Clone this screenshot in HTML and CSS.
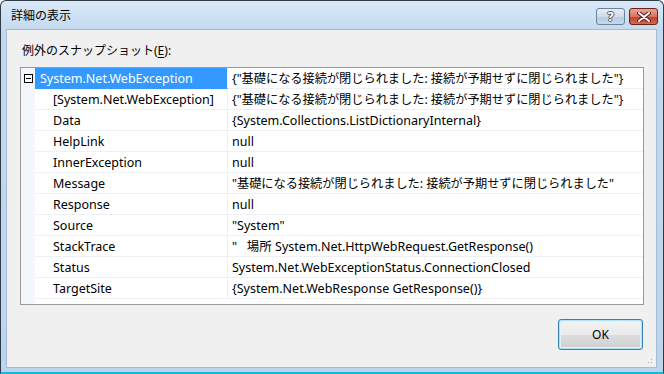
FILE: index.html
```html
<!DOCTYPE html>
<html lang="ja">
<head>
    <meta charset="UTF-8">
    <title>詳細の表示</title>
    <link rel="stylesheet" href="styles.css">
</head>
<body>
    <div class="window">
        <!-- タイトルバー -->
        <div class="titlebar">
            <span class="title">詳細の表示</span>
            <div class="caption-buttons">
                <div class="cap-btn help">?</div>
                <div class="cap-btn close">
                    <svg width="14" height="10" viewBox="0 0 14 10">
                        <path d="M2 1 L12 9 M12 1 L2 9" stroke="#5a1c12" stroke-width="4" stroke-linecap="round"/>
                        <path d="M2 1 L12 9 M12 1 L2 9" stroke="#ffffff" stroke-width="2" stroke-linecap="round"/>
                    </svg>
                </div>
            </div>
        </div>

        <div class="client">
            <div class="label">例外のスナップショット(<u>E</u>):</div>

            <div class="grid">
                <div class="row">
                    <div class="gutter"><span class="expander"></span></div>
                    <div class="name selected">System.Net.WebException</div>
                    <div class="value jp">{"基礎になる接続が閉じられました: 接続が予期せずに閉じられました"}</div>
                </div>
                <div class="row">
                    <div class="gutter"></div>
                    <div class="name child">[System.Net.WebException]</div>
                    <div class="value jp">{"基礎になる接続が閉じられました: 接続が予期せずに閉じられました"}</div>
                </div>
                <div class="row">
                    <div class="gutter"></div>
                    <div class="name child">Data</div>
                    <div class="value">{System.Collections.ListDictionaryInternal}</div>
                </div>
                <div class="row">
                    <div class="gutter"></div>
                    <div class="name child">HelpLink</div>
                    <div class="value">null</div>
                </div>
                <div class="row">
                    <div class="gutter"></div>
                    <div class="name child">InnerException</div>
                    <div class="value">null</div>
                </div>
                <div class="row">
                    <div class="gutter"></div>
                    <div class="name child">Message</div>
                    <div class="value jp">"基礎になる接続が閉じられました: 接続が予期せずに閉じられました"</div>
                </div>
                <div class="row">
                    <div class="gutter"></div>
                    <div class="name child">Response</div>
                    <div class="value">null</div>
                </div>
                <div class="row">
                    <div class="gutter"></div>
                    <div class="name child">Source</div>
                    <div class="value">"System"</div>
                </div>
                <div class="row">
                    <div class="gutter"></div>
                    <div class="name child">StackTrace</div>
                    <div class="value">"&nbsp;&nbsp;&nbsp;場所 System.Net.HttpWebRequest.GetResponse()</div>
                </div>
                <div class="row">
                    <div class="gutter"></div>
                    <div class="name child">Status</div>
                    <div class="value">System.Net.WebExceptionStatus.ConnectionClosed</div>
                </div>
                <div class="row">
                    <div class="gutter"></div>
                    <div class="name child">TargetSite</div>
                    <div class="value">{System.Net.WebResponse GetResponse()}</div>
                </div>
                <div class="grid-fill">
                    <div class="gutter"></div>
                    <div class="fill"></div>
                </div>
            </div>

            <div class="buttons">
                <button class="ok">OK</button>
            </div>
            <div class="grip"></div>
        </div>
    </div>
</body>
</html>
```

FILE: styles.css
```css
/* ウィンドウ枠 */
body {
    margin: 0;
    background: #ffffff;
    font-family: "Noto Sans", "Noto Sans CJK JP", sans-serif;
    font-size: 12px;
    color: #000;
}
.window {
    width: 664px;
    height: 374px;
    box-sizing: border-box;
    border: 1px solid #2e3a46;
    border-bottom: 2px solid #1ab6d6;
    border-radius: 6px 6px 0 0;
    background: linear-gradient(to bottom, #d9e8f7 0px, #c4d9ef 30px, #bcd5ee 100%);
    padding: 0 6px 4px 5px;
    display: flex;
    flex-direction: column;
}
.titlebar {
    height: 28px;
    display: flex;
    align-items: center;
    justify-content: space-between;
}
.title {
    padding-left: 5px;
    padding-bottom: 1px;
    font-size: 12px;
    color: #000;
}
.caption-buttons {
    display: flex;
    gap: 4px;
    align-self: flex-start;
    margin-top: 7px;
}
.cap-btn {
    width: 27px;
    height: 15px;
    border-radius: 3px;
    display: flex;
    align-items: center;
    justify-content: center;
}
.help {
    border: 1px solid #6d8199;
    background: linear-gradient(to bottom, #e6eef8 0%, #cfdcec 50%, #b7cbe2 51%, #c7d8ec 100%);
    color: #fff;
    font-weight: bold;
    font-size: 13px;
    line-height: 15px;
    text-shadow: -1px 0 #4a5a6c, 1px 0 #4a5a6c, 0 -1px #4a5a6c, 0 1px #4a5a6c;
}
.close {
    border: 1px solid #6a2218;
    background: linear-gradient(to bottom, #e8a595 0%, #d9735e 50%, #c23e27 51%, #d16a50 100%);
    margin-right: -1px;
}

/* クライアント領域 */
.client {
    flex: 1;
    position: relative;
    background: #f0f0f0;
    border: 1px solid #a7bcd3;
    padding: 0 12px 0 13px;
    display: flex;
    flex-direction: column;
}
.label {
    margin-top: 11px;
    margin-left: 2px;
    height: 19px;
    line-height: 19px;
    color: #000;
}
.label u {
    text-underline-offset: 2px;
}
.grid {
    margin-top: 7px;
    height: 236px;
    border: 1px solid #9a9a9a;
    background: #ffffff;
    display: flex;
    flex-direction: column;
    font-size: 12.5px;
}
.row {
    display: flex;
    height: 21px;
    line-height: 21px;
}
.gutter {
    width: 14px;
    flex: none;
    background: #f3f6fb;
    display: flex;
    align-items: center;
    justify-content: center;
}
.name {
    width: 193px;
    flex: none;
    border-right: 1px solid #eef0f4;
    border-bottom: 1px solid #eef0f4;
    padding-left: 5px;
    box-sizing: border-box;
    white-space: nowrap;
}
.name.child {
    padding-left: 18px;
}
.name.selected {
    background: #3399ff;
    color: #fff;
    border-bottom-color: #3399ff;
}
.value {
    flex: 1;
    padding-left: 4px;
    border-bottom: 1px solid #eef0f4;
    white-space: nowrap;
    overflow: hidden;
}
.value.jp {
    font-size: 12.2px;
}
.expander {
    width: 7px;
    height: 7px;
    border: 1px solid #000;
    background: #fff;
    position: relative;
    margin-left: 1px;
}
.expander::after {
    content: "";
    position: absolute;
    left: 1px;
    top: 3px;
    width: 5px;
    height: 1px;
    background: #000;
}
.grid-fill {
    flex: 1;
    display: flex;
}
.grid-fill .fill {
    flex: 1;
    background: #fff;
}

/* ボタン */
.buttons {
    display: flex;
    justify-content: flex-end;
    margin-top: 14px;
    padding-right: 1px;
}
.ok {
    width: 85px;
    height: 31px;
    font-family: inherit;
    font-size: 12px;
    color: #000;
    border: 1px solid #3c7fb1;
    border-radius: 3px;
    background: linear-gradient(to bottom, #f2f2f2 0%, #ebebeb 50%, #dddddd 51%, #cfcfcf 100%);
    box-shadow: inset 0 0 0 1px #aee3f8, inset 0 0 0 2px #dff3fb;
    padding: 0;
}
.grip {
    position: absolute;
    right: 2px;
    bottom: 2px;
    width: 10px;
    height: 10px;
    background:
        radial-gradient(circle, #a8a8a8 0.8px, transparent 1px) 0 0 / 3px 3px;
    clip-path: polygon(100% 0, 100% 100%, 0 100%);
}
```
